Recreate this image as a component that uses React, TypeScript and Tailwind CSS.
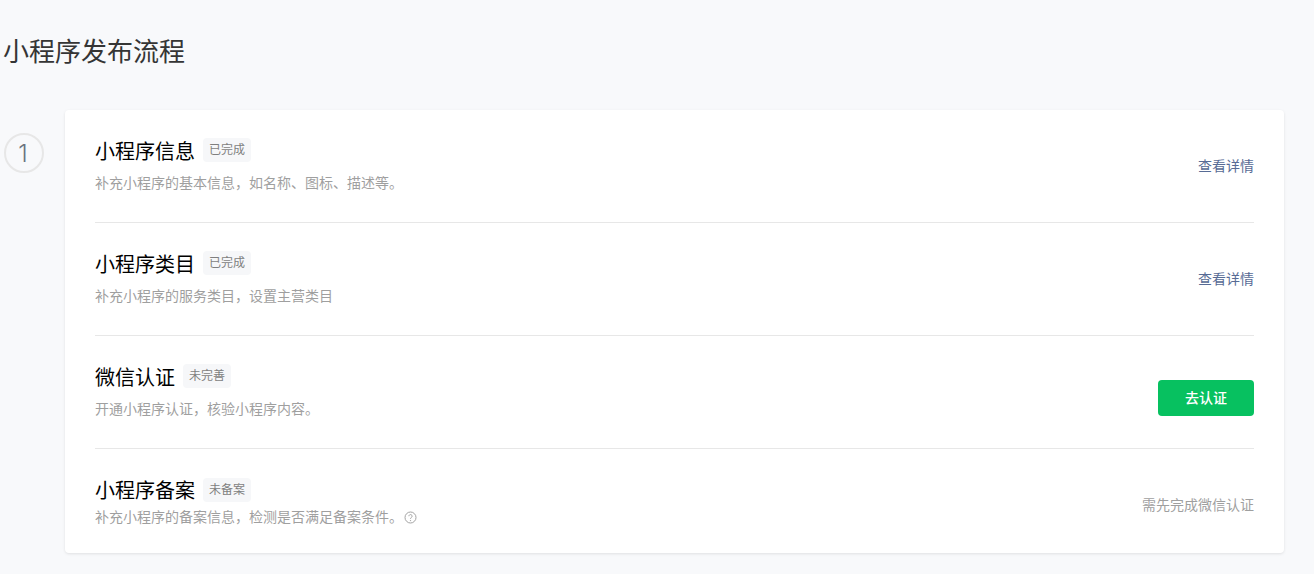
import React from 'react';

const FONT = "font-['Liberation_Sans','Noto_Sans_CJK_SC',sans-serif]";

interface Step {
  title: string;
  status: string;
  desc: string;
  help?: boolean;
  action: 'link' | 'button' | 'text';
  actionLabel: string;
}

const steps: Step[] = [
  { title: '小程序信息', status: '已完成', desc: '补充小程序的基本信息，如名称、图标、描述等。', action: 'link', actionLabel: '查看详情' },
  { title: '小程序类目', status: '已完成', desc: '补充小程序的服务类目，设置主营类目', action: 'link', actionLabel: '查看详情' },
  { title: '微信认证', status: '未完善', desc: '开通小程序认证，核验小程序内容。', action: 'button', actionLabel: '去认证' },
  { title: '小程序备案', status: '未备案', desc: '补充小程序的备案信息，检测是否满足备案条件。', help: true, action: 'text', actionLabel: '需先完成微信认证' },
];

function StepRow({ step, last }: { step: Step; last: boolean }) {
  return (
    <div className={`flex items-center justify-between ${last ? 'h-[104px]' : 'h-[113px] border-b border-[#e7e7e7]'}`}>
      <div className={step.help ? 'mt-[2px]' : '-mt-[2px]'}>
        <div className="flex items-center">
          <h3 className="text-[20px] leading-[28px] font-normal text-black">{step.title}</h3>
          <span className="ml-2 -mt-[3px] h-6 px-[6px] flex items-center rounded-sm bg-[#f6f7f9] text-[12px] text-[#7f7f7f]">
            {step.status}
          </span>
        </div>
        <p className={`flex items-center text-[14px] leading-5 text-[#9f9f9f] ${step.help ? 'mt-[2px]' : 'mt-[7px]'}`}>
          {step.desc}
          {step.help && (
            <svg className="ml-[1px]" width="13" height="13" viewBox="0 0 13 13" fill="none">
              <circle cx="6.5" cy="6.5" r="5.5" stroke="#a3a3a3" />
              <path d="M4.9 5.2a1.6 1.6 0 1 1 2.5 1.3c-.6.4-.9.7-.9 1.3" stroke="#a3a3a3" />
              <circle cx="6.5" cy="9.6" r=".7" fill="#a3a3a3" />
            </svg>
          )}
        </p>
      </div>
      {step.action === 'link' && <a className="text-[14px] text-[#576b95]">{step.actionLabel}</a>}
      {step.action === 'button' && (
        <button className="mt-3 w-24 h-9 rounded bg-[#07c160] text-[14px] font-medium text-white">{step.actionLabel}</button>
      )}
      {step.action === 'text' && <span className="mt-2 text-[14px] text-[#9f9f9f]">{step.actionLabel}</span>}
    </div>
  );
}

export default function App() {
  return (
    <div className={`${FONT} h-[574px] overflow-hidden bg-[#f8f9fb] pl-1`}>
      <h1 className="-ml-px pt-[34px] h-[110px] text-[26px] leading-9 font-normal text-[#353535]">小程序发布流程</h1>
      <div className="flex items-start">
        <div className="mt-[23px] w-10 h-10 shrink-0 rounded-full border-2 border-[#e7e7e7] flex items-center justify-center font-['Inter'] font-light text-[24px] text-[#6b7380]">
          <span className="-ml-[2px] mt-[2px]">1</span>
        </div>
        <div className="ml-[21px] w-[1219px] rounded bg-white px-[30px] shadow-[0_1px_3px_rgba(0,0,0,0.1)]">
          {steps.map((step, i) => (
            <StepRow key={step.title} step={step} last={i === steps.length - 1} />
          ))}
        </div>
      </div>
    </div>
  );
}
